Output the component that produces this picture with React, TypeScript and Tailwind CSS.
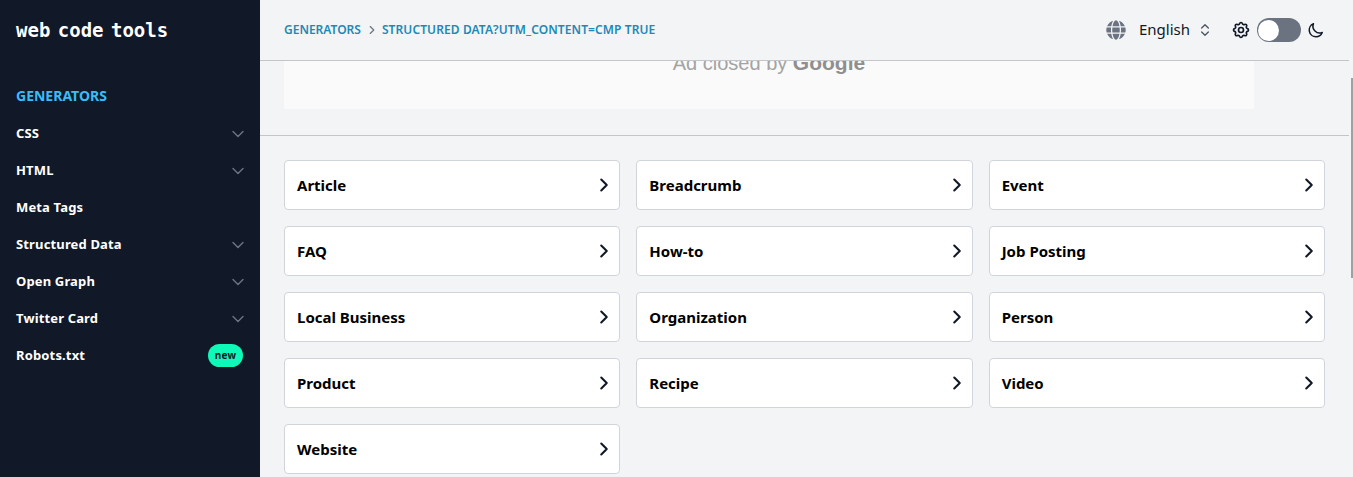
import React from 'react';
import { ChevronDown, ChevronRight, ChevronsUpDown } from 'lucide-react';
import { FaGlobe } from 'react-icons/fa';
import { HiOutlineCog, HiOutlineMoon } from 'react-icons/hi';

const navItems = [
  { label: 'CSS', chevron: true },
  { label: 'HTML', chevron: true },
  { label: 'Meta Tags', chevron: false },
  { label: 'Structured Data', chevron: true },
  { label: 'Open Graph', chevron: true },
  { label: 'Twitter Card', chevron: true },
];

const generators = [
  'Article', 'Breadcrumb', 'Event',
  'FAQ', 'How-to', 'Job Posting',
  'Local Business', 'Organization', 'Person',
  'Product', 'Recipe', 'Video',
  'Website',
];

function Sidebar() {
  return (
    <aside className="w-[260px] h-full shrink-0 bg-[#111827] text-white px-4">
      <div className="h-[60px] flex items-center font-['DejaVu_Sans_Mono',monospace] text-[19px] font-bold [word-spacing:-4px]">
        web code tools
      </div>
      <div className="mt-[26px] h-[19px] flex items-center text-[14px] font-bold text-[#38bdf8]">GENERATORS</div>
      <nav className="mt-[10px]">
        {navItems.map((item) => (
          <div key={item.label} className="h-[37px] flex items-center justify-between text-[13px] font-bold tracking-[0.15px]">
            <span>{item.label}</span>
            {item.chevron && <ChevronDown size={20} strokeWidth={1.75} className="-mr-[4px] text-[#6b7280]" />}
          </div>
        ))}
        <div className="h-[37px] flex items-center justify-between text-[13px] font-bold tracking-[0.15px]">
          <span>Robots.txt</span>
          <span className="mr-[1px] w-[35px] h-[23px] rounded-full bg-[#0ffab9] text-[#111827] text-[10px] flex items-center justify-center">new</span>
        </div>
      </nav>
    </aside>
  );
}

function Header() {
  return (
    <header className="h-[61px] shrink-0 border-b border-[#c4c5c8] flex items-center justify-between pl-6 pr-6">
      <div className="flex items-center text-[12px] font-semibold text-[#1b8ab5]">
        <span>GENERATORS</span>
        <ChevronRight size={14} className="mx-[4px] text-[#6b7280]" />
        <span className="-ml-[1px] tracking-[0.1px]">STRUCTURED DATA?UTM_CONTENT=CMP TRUE</span>
      </div>
      <div className="flex items-center">
        <FaGlobe size={20} className="text-[#6b7280]" />
        <span className="ml-[13px] text-[15px] leading-[20px] -mt-[2px] text-[#111827]">English</span>
        <ChevronsUpDown size={16} strokeWidth={2} className="ml-[7px] text-[#4b5563]" />
        <HiOutlineCog size={20} className="ml-[18px] text-[#111827]" />
        <div className="ml-[6px] w-[44px] h-[24px] rounded-full bg-[#6b7280] flex items-center px-[1px]">
          <div className="w-[21px] h-[21px] rounded-full bg-white" />
        </div>
        <HiOutlineMoon size={18} className="ml-[6px] text-[#111827]" />
      </div>
    </header>
  );
}

export default function App() {
  return (
    <div className="w-full h-[477px] overflow-hidden flex bg-[#f3f4f6] font-['Noto_Sans',sans-serif]">
      <Sidebar />
      <main className="flex-1 min-w-0 flex">
        <div className="flex-1 min-w-0 overflow-hidden flex flex-col">
          <Header />
          <div className="border-b border-[#c4c5c8] h-[75px] shrink-0 px-6">
            <div className="h-[48px] w-[970px] bg-[#fafafa] overflow-hidden flex justify-center">
              <span className="-mt-[9px] h-[20px] font-['Liberation_Sans',sans-serif] text-[20px] leading-[22px] text-[#a3a3a3]">
                Ad closed by <span className="text-[21px] font-bold text-[#8f8f8f]">Google</span>
              </span>
            </div>
          </div>
          <div className="grid grid-cols-3 gap-4 px-6 pt-6">
            {generators.map((name) => (
              <div key={name} className="h-[50px] bg-white border border-[#d1d5db] rounded flex items-center justify-between pl-3 pr-[4px]">
                <span className="text-[15px] font-bold text-black">{name}</span>
                <ChevronRight size={22} strokeWidth={2.25} className="text-[#111827]" />
              </div>
            ))}
          </div>
        </div>
        <div className="w-[4px] shrink-0 pl-[2px] pt-[78px]">
          <div className="h-[200px] bg-[#a0a0a0]" />
        </div>
      </main>
    </div>
  );
}
